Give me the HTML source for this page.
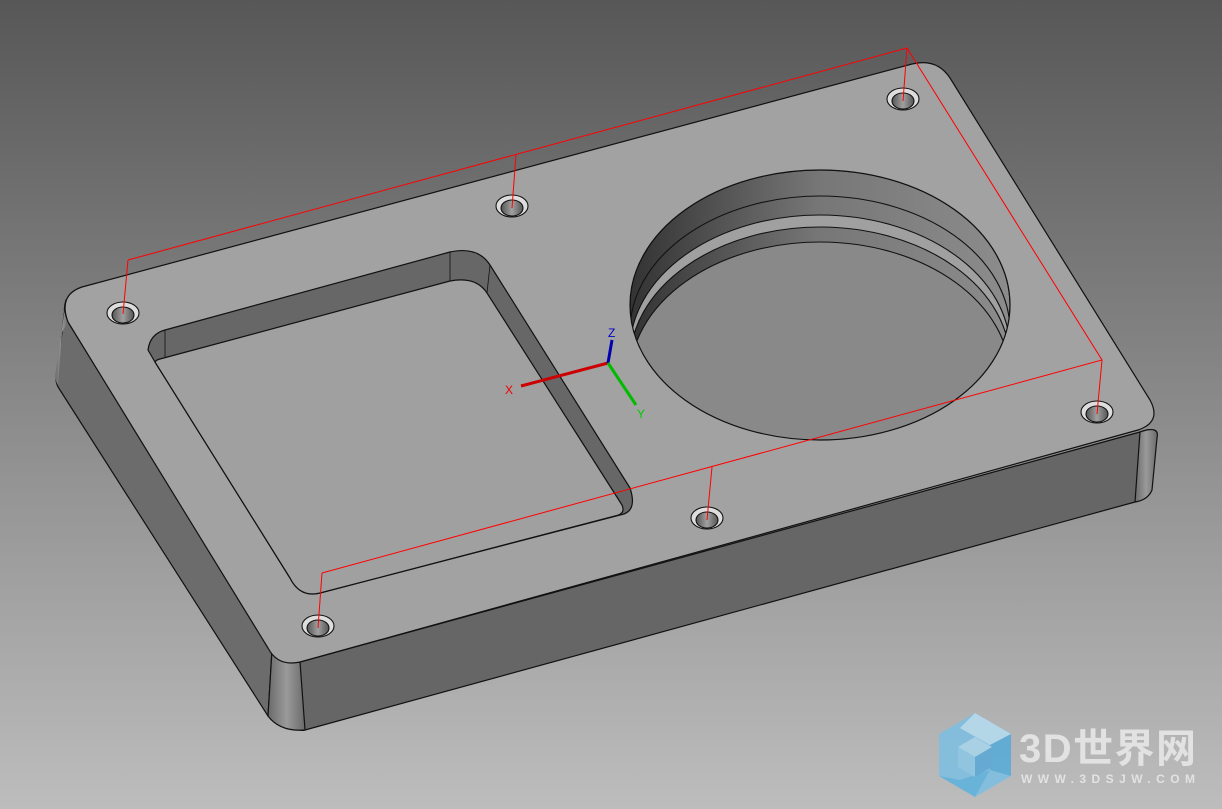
<!DOCTYPE html>
<html><head><meta charset="utf-8"><style>
html,body{margin:0;padding:0;width:1222px;height:809px;overflow:hidden}
svg{display:block}
</style></head><body>
<svg width="1222" height="809" viewBox="0 0 1222 809" xmlns="http://www.w3.org/2000/svg">
<defs>
<linearGradient id="bg" x1="0" y1="0" x2="0" y2="1">
<stop offset="0" stop-color="#575757"/><stop offset="1" stop-color="#bdbdbd"/></linearGradient>
<linearGradient id="cw" x1="630" y1="0" x2="1010" y2="0" gradientUnits="userSpaceOnUse">
<stop offset="0" stop-color="#333"/><stop offset="0.5" stop-color="#777"/><stop offset="1" stop-color="#8c8c8c"/></linearGradient>
<linearGradient id="hole" x1="0" y1="0" x2="1" y2="0">
<stop offset="0" stop-color="#555"/><stop offset="0.5" stop-color="#a0a0a0"/><stop offset="1" stop-color="#555"/></linearGradient>
<linearGradient id="corner" x1="0" y1="0" x2="1" y2="0">
<stop offset="0" stop-color="#6a6a6a"/><stop offset="0.5" stop-color="#9a9a9a"/><stop offset="1" stop-color="#6a6a6a"/></linearGradient>
<clipPath id="cc"><ellipse cx="820" cy="305" rx="190" ry="135"/></clipPath>
</defs>
<rect width="1222" height="809" fill="url(#bg)"/>
<g stroke="#111" stroke-width="1.2" stroke-linejoin="round">
<path d="M66,300 Q62,312 68,322 L272,650 L268,716 L60,390 Q54,382 57,372 Z" fill="#6c6c6c"/>
<path d="M66,300 Q62,312 68,322 L62,332 L58,385 Q54,380 56,370 Z" fill="url(#corner)" stroke="none"/>
<path d="M300,662 L1140,432 Q1158,425 1156,440 L1152,485 Q1150,498 1135,502 L305,730 Q298,732 298,725 Z" fill="#666"/>
<path d="M272,650 Q280,664 300,662 L305,730 Q280,732 268,716 Z" fill="url(#corner)"/>
<path d="M1140,432 Q1160,425 1157,438 L1152,490 Q1148,500 1135,502 Z" fill="url(#corner)"/>
<path d="M82,287 L912,64 Q937,58 950,78 L1150,400 Q1162,422 1138,430 L300,662 Q278,667 268,648 L68,322 Q58,295 82,287 Z" fill="#a2a2a2"/>
<path d="M148,350 Q150,334 165,330 L450,252 Q478,246 490,265 L630,488 Q638,512 620,515 L320,593 Q300,598 290,578 L155,362 Z" fill="#676767"/>
<path d="M155,362 Q156,360 160,359 L450,281 Q476,276 487,293 L622,505 Q626,514 615,516 L320,593 Q300,598 290,578 Z" fill="#a0a0a0"/>
<line x1="165" y1="330" x2="165" y2="357" stroke-width="0.8"/>
<line x1="450" y1="252" x2="450" y2="281" stroke-width="0.8"/>
<line x1="490" y1="265" x2="487" y2="293" stroke-width="0.8"/>
</g>
<g clip-path="url(#cc)" stroke="#111" stroke-width="1.1">
<ellipse cx="820" cy="305" rx="190" ry="135" fill="url(#cw)"/>
<ellipse cx="820" cy="331" rx="190" ry="135" fill="url(#cw)"/>
<ellipse cx="820" cy="350" rx="190" ry="135" fill="#a0a0a0"/>
<ellipse cx="820" cy="362" rx="190" ry="135" fill="url(#cw)"/>
<ellipse cx="820" cy="377" rx="190" ry="135" fill="#898989"/>
</g>
<ellipse cx="820" cy="305" rx="190" ry="135" fill="none" stroke="#111" stroke-width="1.2"/>
<g stroke="#111" stroke-width="1.1">
<ellipse cx="123" cy="313" rx="16" ry="11" fill="#ddd"/><ellipse cx="123" cy="315" rx="11" ry="8" fill="url(#hole)"/>
<ellipse cx="512" cy="206" rx="16" ry="11" fill="#ddd"/><ellipse cx="512" cy="208" rx="11" ry="8" fill="url(#hole)"/>
<ellipse cx="903" cy="99" rx="16" ry="11" fill="#ddd"/><ellipse cx="903" cy="101" rx="11" ry="8" fill="url(#hole)"/>
<ellipse cx="1097" cy="412" rx="16" ry="11" fill="#ddd"/><ellipse cx="1097" cy="414" rx="11" ry="8" fill="url(#hole)"/>
<ellipse cx="707" cy="518" rx="16" ry="11" fill="#ddd"/><ellipse cx="707" cy="520" rx="11" ry="8" fill="url(#hole)"/>
<ellipse cx="318" cy="626" rx="16" ry="11" fill="#ddd"/><ellipse cx="318" cy="628" rx="11" ry="8" fill="url(#hole)"/>
</g>
<g stroke="#f00" stroke-width="1" fill="none">
<polyline points="128,260 907,48 1102,360 322,573"/>
<line x1="128" y1="260" x2="123" y2="314"/>
<line x1="516" y1="155" x2="512" y2="208"/>
<line x1="907" y1="48" x2="903" y2="101"/>
<line x1="1102" y1="360" x2="1097" y2="414"/>
<line x1="712" y1="467" x2="707" y2="520"/>
<line x1="322" y1="573" x2="318" y2="628"/>
</g>
<line x1="608" y1="363" x2="521" y2="386" stroke="#c00" stroke-width="3"/>
<line x1="608" y1="363" x2="612" y2="340" stroke="#0000b0" stroke-width="3"/>
<line x1="608" y1="363" x2="636" y2="405" stroke="#0b0" stroke-width="3"/>
<g font-family="Liberation Sans, sans-serif" font-size="12">
<text x="505" y="394" fill="#e00">X</text>
<text x="608" y="337" fill="#00c">Z</text>
<text x="637" y="418" fill="#0c0">Y</text>
</g>
<g opacity="0.9">
<polygon points="975,713 1011,734 1011,776 975,797 939,776 939,734" fill="#7fbfe0"/>
<polygon points="975,713 1011,734 990,745 960,728" fill="#b5dbee"/>
<polygon points="1011,734 1011,776 990,770 990,745" fill="#5aacd8"/>
<polygon points="939,776 975,797 990,770 960,780" fill="#62b3dc"/>
<polygon points="975,737 992,747 975,757 958,747" fill="#a8d4ea"/>
<polygon points="958,747 975,757 975,777 958,767" fill="#8cc6e4"/>
<polygon points="975,757 992,747 992,767 975,777" fill="#5ea9d6"/>
</g>
<text x="1019" y="762" font-family="Liberation Sans, 'Noto Sans CJK SC', sans-serif" font-size="40" font-weight="bold" fill="#e2e2e2" textLength="177">3D世界网</text>
<text x="1021" y="783" font-family="Liberation Sans, sans-serif" font-size="12" font-weight="bold" fill="#e2e2e2" textLength="174">WWW.3DSJW.COM</text>
</svg>
</body></html>
